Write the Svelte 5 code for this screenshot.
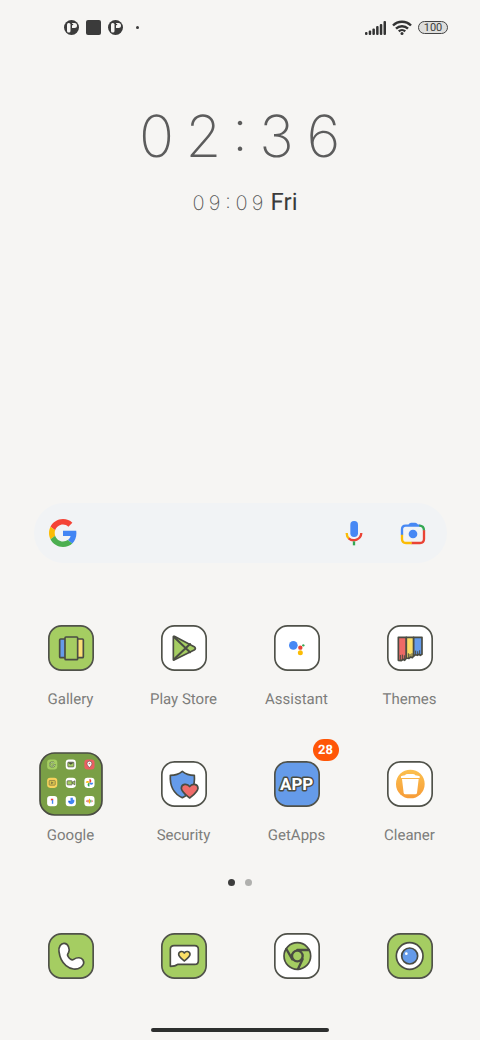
<script>
  const time = ['0', '2', ':', '3', '6'];
  const date = ['0', '9', ':', '0', '9'];
  const apps = [
    { name: 'Gallery', icon: 'gallery', tile: '#a5cd62' },
    { name: 'Play Store', icon: 'play', tile: '#fff' },
    { name: 'Assistant', icon: 'assistant', tile: '#fff' },
    { name: 'Themes', icon: 'themes', tile: '#fff' },
    { name: 'Google', icon: 'folder' },
    { name: 'Security', icon: 'security', tile: '#fff' },
    { name: 'GetApps', icon: 'getapps', tile: '#659be9', badge: 28 },
    { name: 'Cleaner', icon: 'cleaner', tile: '#fff' }
  ];
  const dock = [
    { name: 'Phone', icon: 'phone', tile: '#a5cd62' },
    { name: 'Messages', icon: 'messages', tile: '#a5cd62' },
    { name: 'Chrome', icon: 'chrome', tile: '#fff' },
    { name: 'Camera', icon: 'camera', tile: '#a5cd62' }
  ];
</script>

{#snippet notice()}
  <svg width="15" height="15" viewBox="0 0 30 30" aria-hidden="true">
    <circle cx="15" cy="15" r="15" fill="#3b3b3b" />
    <rect x="6" y="6" width="7" height="19" rx="3" fill="#f6f5f3" />
    <path d="M16 6h5a5 5 0 0 1 0 10h-5z" fill="#f6f5f3" />
    <circle cx="17" cy="9" r="1.500" fill="#3b3b3b" />
  </svg>
{/snippet}

{#snippet art(app)}
  {#if app.icon === 'folder'}
    <svg class="folder" viewBox="0 0 189 189" aria-hidden="true">
      <rect x="3" y="3" width="183" height="183" rx="43" fill="#7a9f46" stroke="#4a4c43" stroke-width="5" />
      <g>
        <rect x="24" y="22" width="30" height="30" rx="9" fill="#a5cd62" />
        <rect x="79" y="22" width="30" height="30" rx="9" fill="#fff" />
        <rect x="134" y="22" width="30" height="30" rx="9" fill="#e95f62" />
        <rect x="24" y="76" width="30" height="30" rx="9" fill="#f7d25d" />
        <rect x="79" y="76" width="30" height="30" rx="9" fill="#fff" />
        <rect x="134" y="76" width="30" height="30" rx="9" fill="#fff" />
        <rect x="24" y="130" width="30" height="30" rx="9" fill="#fff" />
        <rect x="79" y="130" width="30" height="30" rx="9" fill="#fff" />
        <rect x="134" y="130" width="30" height="30" rx="9" fill="#fff" />
      </g>
      <path d="M44 32a7 7 0 1 0 2 6h-6" fill="none" stroke="#5f7a3a" stroke-width="5" />
      <path d="M44 32a7 7 0 1 0 2 6h-6" fill="none" stroke="#d9ecc0" stroke-width="2" />
      <rect x="85" y="30" width="18" height="14" rx="2" fill="#a5cd62" stroke="#4a4c43" stroke-width="2" />
      <path d="M85 31l9 7 9-7z" fill="#4a4c43" />
      <path d="M149 46c-5-6-7-8-7-12a7 7 0 0 1 14 0c0 4-2 6-7 12z" fill="#fff" stroke="#4a4c43" stroke-width="1.500" />
      <circle cx="149" cy="34" r="2.500" fill="#e95f62" />
      <rect x="30" y="84" width="18" height="14" rx="2" fill="#d6c44f" stroke="#7a7040" stroke-width="2" />
      <path d="M36 87l7 4-7 4z" fill="#7a7040" />
      <rect x="83" y="85" width="15" height="12" rx="2" fill="#a5cd62" stroke="#4a4c43" stroke-width="2" />
      <path d="M98 90l8-5v12l-8-5z" fill="#a5cd62" stroke="#4a4c43" stroke-width="2" />
      <path d="M149 91V80a5.500 5.500 0 0 1 0 11z" fill="#ea4335" />
      <path d="M149 91h11a5.500 5.500 0 0 1-11 0z" fill="#4285f4" />
      <path d="M149 91v11a5.500 5.500 0 0 1 0-11z" fill="#34a853" />
      <path d="M149 91h-11a5.500 5.500 0 0 1 11 0z" fill="#fbbc04" />
      <path d="M35 138h7v5h-7z" fill="#ea4335" />
      <path d="M38 142h4v11h-4z" fill="#4285f4" />
      <path d="M93 135h7v6h4c2 6-2 13-9 13s-9-5-9-9h7z" fill="#4285f4" />
      <path d="M86 144h6v6z" fill="#1a5bd0" />
      <path d="M141 143v4M145 141v8" stroke="#ea4335" stroke-width="3" />
      <path d="M149 138v14" stroke="#fbbc04" stroke-width="3" />
      <path d="M153 141v8" stroke="#34a853" stroke-width="3" />
      <path d="M157 143v4" stroke="#ea4335" stroke-width="3" />
    </svg>
  {:else}
    <svg class="tile" viewBox="0 0 138 138" aria-hidden="true">
      <rect x="2.500" y="2.500" width="133" height="133" rx="38" fill={app.tile} stroke="#50524a" stroke-width="5" />
      <g stroke="#4a4c43" stroke-width="5" stroke-linejoin="round" stroke-linecap="round">
        {#if app.icon === 'gallery'}
          <rect x="35" y="42" width="18" height="56" rx="3" fill="#659be9" />
          <rect x="86" y="42" width="20" height="56" rx="3" fill="#fbdf77" />
          <rect x="51" y="36" width="38" height="68" rx="3" fill="#a5cd62" />
        {:else if app.icon === 'play'}
          <path d="M37 35v69q0 2 2 1l62-31q4-4 0-8L40 34q-3-1-3 1z" fill="#a5cd62" />
          <path d="M39 36l48 46M39 103l48-46" fill="none" stroke-width="6" />
        {:else if app.icon === 'assistant'}
          <g stroke="none">
            <circle cx="58" cy="61" r="13" fill="#4788f4" />
            <circle cx="79" cy="68" r="6.500" fill="#ea4335" />
            <circle cx="79" cy="83" r="7.500" fill="#fbbc04" />
            <circle cx="88" cy="61" r="3.500" fill="#34a853" />
          </g>
        {:else if app.icon === 'themes'}
          <path d="M34 37h24v63l-5 6-5-3-5 4-9-1z" fill="#ed6a66" />
          <path d="M58 37h22v56l-4 5-5-2-5 4-8-1z" fill="#fbdf67" />
          <path d="M80 37h25v51l-5 3-4-3-5 3-5-2-6 4z" fill="#659be9" />
          <path d="M40 91v14M46 90v15M52 92v12M64 86v12M69 88v9M75 86v10M86 78v10M92 80v9M98 77v11" fill="none" stroke-width="3" />
        {:else if app.icon === 'security'}
          <path d="M64 31q14 12 36 12c3 31-7 53-36 67C36 97 26 75 28 43q22 0 36-12z" fill="#659be9" />
          <path d="M86 111C74 101 62 93 61 82c0-14 18-16 25-5 7-11 25-9 25 5-1 11-13 19-25 29z" fill="#ef6c6a" />
        {:else if app.icon === 'getapps'}
          <text x="68" y="87" text-anchor="middle">APP</text>
        {:else if app.icon === 'cleaner'}
          <defs>
            <linearGradient id="amber" x1="0" y1="0" x2="0" y2="1">
              <stop offset="0" stop-color="#fbc04e" /><stop offset="1" stop-color="#f79c38" />
            </linearGradient>
          </defs>
          <g stroke="none">
            <circle cx="70" cy="69" r="43" fill="url(#amber)" />
            <path d="M42 46q2-2 12-3 2-4 8-4h15q6 0 8 4 10 1 13 3v5H42zM45 54h50l-5 42q-1 4-5 4H55q-4 0-5-4z" fill="#fff" />
          </g>
        {:else if app.icon === 'phone'}
          <path d="M33 56C31 41 39 30 49 31c12 1 17 17 13 27-2 4-6 6-2 12 5 8 11 13 17 9 11-7 23-6 28 2 5 9 0 17-7 22-12 8-30 7-44-5C42 88 35 72 33 56z" fill="#fff" />
        {:else if app.icon === 'messages'}
          <path d="M39 38h62q11 0 11 11v34q0 11-11 11H50q-7 6-22 6V49q0-11 11-11z" fill="#fff" />
          <path d="M70 84C60 76 53 71 53 64c0-10 13-11 17-4 4-7 17-6 17 4 0 7-7 12-17 20z" fill="#fbdf67" />
        {:else if app.icon === 'chrome'}
          <circle cx="70" cy="69" r="40" fill="#a5cd62" />
          <path d="M70 51h35M37 48l18 31M86 78L72 108" fill="none" stroke-width="7" />
          <circle cx="70" cy="69" r="16" fill="#a5cd62" stroke-width="7" />
        {:else}
          <circle cx="68" cy="69" r="40" fill="#fff" />
          <circle cx="68" cy="69" r="24" fill="#659be9" />
          <circle cx="58" cy="62" r="4" fill="#fff" stroke="none" />
        {/if}
      </g>
    </svg>
  {/if}
{/snippet}

<main>
  <header>
    <div class="notices">
      {@render notice()}
      <span class="square"></span>
      {@render notice()}
      <span class="more"></span>
    </div>
    <div class="system">
      <svg width="21" height="14" viewBox="0 0 21 14" fill="#333" aria-hidden="true">
        <rect x="0" y="11" width="2.500" height="3" rx="1" />
        <rect x="3.700" y="9.500" width="2.500" height="4.500" rx="1" />
        <rect x="7.400" y="7.500" width="2.500" height="6.500" rx="1" />
        <rect x="11.100" y="5" width="2.500" height="9" rx="1" />
        <rect x="14.800" y="3" width="2.500" height="11" rx="1" />
        <rect x="18.500" y="0" width="2.500" height="14" rx="1" />
      </svg>
      <svg width="20" height="15" viewBox="0 0 20 15" fill="none" stroke="#333" stroke-width="2.400" aria-hidden="true">
        <path d="M1 5.500a12.700 12.700 0 0 1 18 0M4 8.700a8.500 8.500 0 0 1 12 0M6.800 11.400a4.600 4.600 0 0 1 6.400 0" />
        <circle cx="10" cy="13.400" r="1.500" fill="#333" stroke="none" />
      </svg>
      <span class="battery">100</span>
    </div>
  </header>

  <section class="clock">
    <div class="time">
      {#each time as c}<span class:colon={c === ':'}>{c}</span>{/each}
    </div>
    <div class="day">
      <div class="date">
        {#each date as c}<span class:colon={c === ':'}>{c}</span>{/each}
      </div>
      <span class="weekday">Fri</span>
    </div>
  </section>

  <div class="search">
    <button aria-label="Google search" class="open">
      <svg width="28" height="28" viewBox="0 0 48 48" aria-hidden="true">
        <path fill="#f44336" d="M24 9.500c3.540 0 6.710 1.220 9.210 3.600l6.850-6.850C35.900 2.380 30.470 0 24 0 14.620 0 6.510 5.380 2.560 13.220l7.980 6.190C12.430 13.720 17.740 9.500 24 9.500z" />
        <path fill="#4285f4" d="M46.980 24.550c0-1.570-.15-3.090-.38-4.550H24v9.020h12.940c-.58 2.960-2.260 5.480-4.780 7.180l7.730 6c4.510-4.180 7.090-10.360 7.090-17.650z" />
        <path fill="#fbbc05" d="M10.530 28.590c-.48-1.450-.76-2.990-.76-4.590s.27-3.140.76-4.590l-7.980-6.190C.92 16.460 0 20.120 0 24c0 3.880.92 7.540 2.560 10.780l7.970-6.190z" />
        <path fill="#4caf50" d="M24 48c6.480 0 11.930-2.130 15.890-5.810l-7.730-6c-2.150 1.450-4.920 2.300-8.160 2.300-6.260 0-11.570-4.220-13.470-9.910l-7.980 6.190C6.510 42.620 14.620 48 24 48z" />
      </svg>
    </button>
    <button aria-label="Voice search">
      <svg width="18" height="26" viewBox="0 0 54 78" fill="none" stroke-width="7" aria-hidden="true">
        <rect x="16" y="3" width="23" height="48" rx="11" fill="#4788f4" />
        <path d="M5 39q0 11 7 17" stroke="#fbbc05" />
        <path d="M11 55a23 23 0 0 0 38-16" stroke="#ea4335" />
        <path d="M27 64v12" stroke="#34a853" />
      </svg>
    </button>
    <button aria-label="Lens">
      <svg width="26" height="24" viewBox="0 0 78 72" fill="none" stroke-width="7" aria-hidden="true">
        <path d="M6 42V25q0-11 11-11h44" stroke="#4788f4" />
        <path d="M24 14q3-9 9-9h13q6 0 9 9z" fill="#4788f4" />
        <path d="M58 14q14 0 14 15" stroke="#34a853" />
        <path d="M72 28v26q0 12-12 12H34" stroke="#ea4335" />
        <path d="M6 41v13q0 12 12 12h17" stroke="#fbbc05" />
        <circle cx="39" cy="39" r="13" fill="#4788f4" />
      </svg>
    </button>
  </div>

  <nav class="apps" aria-label="Apps">
    {#each apps as app}
      <button class="app">
        <span class="slot">
          {@render art(app)}
          {#if app.badge}<span class="badge">{app.badge}</span>{/if}
        </span>
        <span class="name">{app.name}</span>
      </button>
    {/each}
  </nav>

  <div class="pages"><span class="on"></span><span></span></div>

  <nav class="dock" aria-label="Dock">
    {#each dock as app}
      <button class="app" aria-label={app.name}>{@render art(app)}</button>
    {/each}
  </nav>

  <div class="handle"></div>
</main>

<style>
  :global(body) {
    margin: 0;
    background: #f6f5f3;
  }
  main {
    box-sizing: border-box;
    min-height: 100vh;
    display: flex;
    flex-direction: column;
    padding-bottom: 8px;
    background: #f6f5f3;
    font-family: Roboto, sans-serif;
    text-rendering: geometricPrecision;
    color: #3b3b3b;
  }
  button {
    border: 0;
    padding: 0;
    background: none;
    font: inherit;
    color: inherit;
    text-rendering: inherit;
  }
  svg {
    display: block;
    flex: none;
  }
  header {
    height: 55px;
    display: flex;
    align-items: center;
    justify-content: space-between;
    padding: 0 32px 0 64px;
  }
  .notices {
    display: flex;
    align-items: center;
    gap: 7px;
  }
  .square {
    width: 15px;
    height: 15px;
    border-radius: 2px;
    background: #3b3b3b;
  }
  .more {
    width: 3px;
    height: 3px;
    margin-left: 6px;
    border-radius: 50%;
    background: #3b3b3b;
  }
  .system {
    display: flex;
    align-items: center;
    gap: 6px;
  }
  .battery {
    box-sizing: border-box;
    width: 30px;
    height: 13px;
    border: 1px solid #444;
    border-radius: 7px;
    background: #dededc;
    font-size: 11px;
    line-height: 12px;
    text-align: center;
  }
  .clock {
    flex: 1;
    display: flex;
    flex-direction: column;
    align-items: center;
    padding-top: 46px;
  }
  .time,
  .date {
    display: flex;
    font-family: Inter, Roboto, sans-serif;
    font-feature-settings: "case" 1;
  }
  .time {
    gap: 15px;
    font-size: 58px;
    line-height: 70px;
    font-weight: 200;
    color: #5c5c5c;
  }
  .time span,
  .date span {
    display: flex;
    justify-content: center;
  }
  .time span {
    width: 32px;
  }
  .time .colon {
    width: 11px;
  }
  .day {
    display: flex;
    align-items: baseline;
    gap: 7px;
    margin-top: 16px;
    margin-left: 10px;
  }
  .date {
    gap: 4px;
    font-size: 20px;
    line-height: 30px;
    font-weight: 200;
    color: #555;
  }
  .date span {
    width: 12px;
  }
  .date .colon {
    width: 7px;
  }
  .weekday {
    font-size: 24px;
    line-height: 30px;
  }
  .search {
    height: 60px;
    display: flex;
    align-items: center;
    gap: 37px;
    margin: 0 33px 0 34px;
    padding: 0 21px 0 15px;
    box-sizing: border-box;
    border-radius: 30px;
    background: #f1f3f5;
  }
  .open {
    flex: 1;
  }
  .apps,
  .dock {
    display: grid;
    grid-template-columns: repeat(4, 1fr);
    padding: 0 14px;
  }
  .apps {
    margin-top: 53px;
    row-gap: 42px;
  }
  .app {
    display: flex;
    flex-direction: column;
    align-items: center;
  }
  .slot {
    position: relative;
    height: 64px;
    display: flex;
    align-items: center;
  }
  .tile {
    width: 46px;
    height: 46px;
  }
  .folder {
    width: 64px;
    height: 64px;
  }
  .tile text {
    font-size: 51px;
    font-weight: 700;
    fill: #fff;
    stroke-width: 9px;
    paint-order: stroke;
  }
  .name {
    margin-top: 8px;
    font-size: 15px;
    line-height: 22px;
    color: #7d7d7b;
    white-space: nowrap;
  }
  .badge {
    position: absolute;
    top: -13px;
    right: -19px;
    width: 26px;
    height: 22px;
    border-radius: 11px;
    background: #ff5607;
    color: #fff;
    font-size: 13px;
    line-height: 24px;
    font-weight: 700;
    text-align: center;
  }
  .pages {
    display: flex;
    justify-content: center;
    gap: 10px;
    margin-top: 33px;
  }
  .pages span {
    width: 7px;
    height: 7px;
    border-radius: 50%;
    background: #b0b0ae;
  }
  .pages .on {
    background: #3d3d3d;
  }
  .dock {
    margin-top: 47px;
  }
  .handle {
    width: 37%;
    height: 4px;
    margin: 49px auto 0;
    border-radius: 2px;
    background: #2d2f2e;
  }
</style>
